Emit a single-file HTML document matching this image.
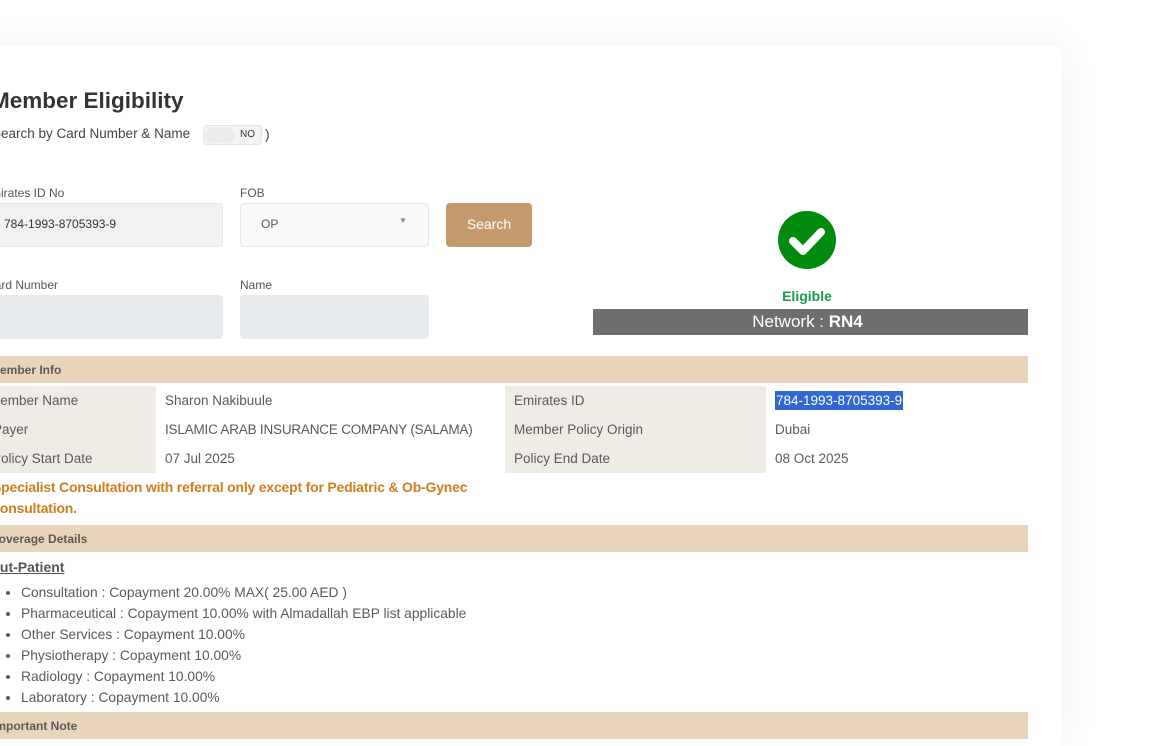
<!DOCTYPE html>
<html style="overflow:hidden;height:746px"><head><meta charset="utf-8"><style>
*{margin:0;padding:0;box-sizing:border-box}
body{width:1149px;height:746px;overflow:hidden;background:#fff;font-family:"Liberation Sans",sans-serif;color:#555;position:relative}
.card{position:absolute;left:-40px;top:46px;width:1101px;height:700px;background:#fff;box-shadow:0 0 40px rgba(0,0,0,0.06)}
.a{position:absolute;white-space:nowrap}
.lbl{font-size:12px;color:#555}
.inp{position:absolute;border-radius:4px;border:1px solid #e6e6e6}
.hdr{position:absolute;left:-20px;width:1048px;height:27px;background:#e8d5bb;font-size:12px;font-weight:bold;color:#5a5a5a;line-height:28px;padding-left:10px}
.row{position:absolute;font-size:13.5px;color:#5a5a5a;line-height:29px;height:29px}
.lc{position:absolute;background:#efebe5}
li{font-size:13.8px;color:#5a5a5a;height:21px;line-height:21px}
</style></head><body>
<div class="card"></div>
<div class="a" style="left:-9px;top:88px;font-size:22.5px;font-weight:bold;color:#333">Member Eligibility</div>
<div class="a" style="left:-8px;top:126px;font-size:13.5px;color:#444">Search by Card Number &amp; Name</div>
<div class="a" style="left:203px;top:125px;width:59px;height:20px;border:1px solid #e4e4e4;border-radius:4px;background:#f3f3f3"></div>
<div class="a" style="left:205px;top:127px;width:30px;height:16px;border-radius:8px;background:#ececec"></div>
<div class="a" style="left:240px;top:129px;font-size:10px;color:#333">NO</div>
<div class="a" style="left:265px;top:126px;font-size:14px;color:#444">)</div>

<div class="a lbl" style="left:-17px;top:186px">Emirates ID No</div>
<div class="inp" style="left:-10px;top:203px;width:233px;height:44px;background:#f1f1f1"></div>
<div class="a" style="left:4px;top:217px;font-size:12px;color:#333">784-1993-8705393-9</div>
<div class="a lbl" style="left:240px;top:186px">FOB</div>
<div class="inp" style="left:240px;top:203px;width:189px;height:44px;background:#f8f8f8"></div>
<div class="a" style="left:261px;top:217px;font-size:12px;color:#555">OP</div>
<div class="a" style="left:399px;top:216px;font-size:8px;color:#888">▼</div>
<div class="a" style="left:446px;top:203px;width:86px;height:44px;background:#c49a6c;border-radius:4px;color:#fff;font-size:14px;text-align:center;line-height:43px">Search</div>

<div class="a lbl" style="left:-14px;top:278px">Card Number</div>
<div class="inp" style="left:-10px;top:295px;width:233px;height:44px;background:#e8ebee;border-color:#e8ebee"></div>
<div class="a lbl" style="left:240px;top:278px">Name</div>
<div class="inp" style="left:240px;top:295px;width:189px;height:44px;background:#e8ebee;border-color:#e8ebee"></div>

<svg class="a" style="left:778px;top:211px" width="58" height="58" viewBox="0 0 58 58"><circle cx="29" cy="29" r="29" fill="#008a0e"/><path d="M15 30 L25 40 L43 21" stroke="#fff" stroke-width="8" fill="none" stroke-linecap="round" stroke-linejoin="round"/></svg>
<div class="a" style="left:593px;width:428px;top:288px;text-align:center;font-size:14px;font-weight:bold;color:#1a9a4a">Eligible</div>
<div class="a" style="left:593px;top:309px;width:435px;height:26px;background:#6e6e6e;color:#fff;font-size:17px;text-align:center;line-height:26px;padding-right:6px">Network : <b>RN4</b></div>

<div class="hdr" style="top:356px">Member Info</div>
<div class="lc" style="left:-10px;top:386px;width:166px;height:87px"></div>
<div class="lc" style="left:505px;top:386px;width:261px;height:87px"></div>
<div class="row" style="left:-11px;top:386px">Member Name</div>
<div class="row" style="left:-7px;top:415px">Payer</div>
<div class="row" style="left:-8px;top:444px">Policy Start Date</div>
<div class="row" style="left:165px;top:386px">Sharon Nakibuule</div>
<div class="row" style="left:165px;top:415px;letter-spacing:-0.2px">ISLAMIC ARAB INSURANCE COMPANY (SALAMA)</div>
<div class="row" style="left:165px;top:444px">07 Jul 2025</div>
<div class="row" style="left:514px;top:386px">Emirates ID</div>
<div class="row" style="left:514px;top:415px">Member Policy Origin</div>
<div class="row" style="left:514px;top:444px">Policy End Date</div>
<div class="a" style="left:775px;top:391px;height:19px;line-height:19px;padding:0 1px;background:#3167d0;color:#fff;font-size:13.5px">784-1993-8705393-9</div>
<div class="row" style="left:775px;top:415px">Dubai</div>
<div class="row" style="left:775px;top:444px">08 Oct 2025</div>

<div class="a" style="left:-8px;top:477px;font-size:14px;font-weight:bold;color:#d07e1c;line-height:21px;letter-spacing:-0.2px">Specialist Consultation with referral only except for Pediatric &amp; Ob-Gynec<br><span style="margin-left:-2px">Consultation.</span></div>

<div class="hdr" style="top:525px">Coverage Details</div>
<div class="a" style="left:-11px;top:559px;font-size:14px;font-weight:bold;color:#555;text-decoration:underline">Out-Patient</div>
<ul class="a" style="left:21px;top:582px;list-style:disc">
<li>Consultation : Copayment 20.00% MAX( 25.00 AED )</li>
<li>Pharmaceutical : Copayment 10.00% with Almadallah EBP list applicable</li>
<li>Other Services : Copayment 10.00%</li>
<li>Physiotherapy : Copayment 10.00%</li>
<li>Radiology : Copayment 10.00%</li>
<li>Laboratory : Copayment 10.00%</li>
</ul>
<div class="hdr" style="top:712px;padding-left:12px">Important Note</div>
</body></html>
